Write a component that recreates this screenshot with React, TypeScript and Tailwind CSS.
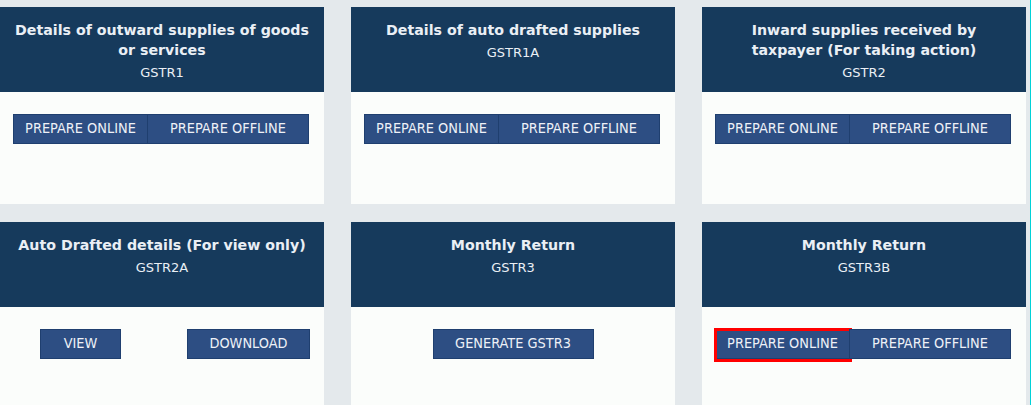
import React from 'react';

type Action = { label: string; width: string; highlighted?: boolean };

type Card = {
    title: string[];
    code: string;
    layout: 'group' | 'split' | 'single';
    actions: Action[];
};

const prepare = (highlighted = false): Action[] => [
    { label: 'PREPARE ONLINE', width: 'w-[135px]', highlighted },
    { label: 'PREPARE OFFLINE', width: 'w-[162px]' },
];

const cards: Card[] = [
    {
        title: ['Details of outward supplies of goods', 'or services'],
        code: 'GSTR1',
        layout: 'group',
        actions: prepare(),
    },
    {
        title: ['Details of auto drafted supplies'],
        code: 'GSTR1A',
        layout: 'group',
        actions: prepare(),
    },
    {
        title: ['Inward supplies received by', 'taxpayer (For taking action)'],
        code: 'GSTR2',
        layout: 'group',
        actions: prepare(),
    },
    {
        title: ['Auto Drafted details (For view only)'],
        code: 'GSTR2A',
        layout: 'split',
        actions: [
            { label: 'VIEW', width: 'w-[81px]' },
            { label: 'DOWNLOAD', width: 'w-[123px]' },
        ],
    },
    {
        title: ['Monthly Return'],
        code: 'GSTR3',
        layout: 'single',
        actions: [{ label: 'GENERATE GSTR3', width: 'w-[161px]' }],
    },
    {
        title: ['Monthly Return'],
        code: 'GSTR3B',
        layout: 'group',
        actions: prepare(true),
    },
];

const ActionButton = ({ action, joined }: { action: Action; joined?: boolean }) => (
    <button
        className={`relative h-[30px] ${action.width} bg-[#2d4e83] border border-[#1f3f6f] text-[14.4px] text-[#eef1f7] whitespace-nowrap ${joined ? '-ml-px first:ml-0' : ''}`}
        style={{ fontFamily: '"DejaVu Sans Condensed", "DejaVu Sans", sans-serif' }}
    >
        {action.label}
        {action.highlighted && (
            <span className="absolute -left-[2px] -top-[2px] w-[138px] h-[34px] border-[3px] border-[#ff0000] pointer-events-none" />
        )}
    </button>
);

const ReturnCard = ({ card }: { card: Card }) => (
    <div className="flex flex-col bg-[#fbfdfb] h-[197px]">
        <div className="h-[85px] bg-[#163a5c] pt-[13px] text-center text-[#eaeff5]">
            {card.title.map((line) => (
                <div key={line} className="text-[14.2px] leading-[20px] font-bold whitespace-nowrap">
                    {line}
                </div>
            ))}
            <div className="text-[13px] leading-[20px] mt-[3px]">{card.code}</div>
        </div>
        <div className="pt-[22px]">
            {card.layout === 'group' && (
                <div className="flex pl-[13px]">
                    {card.actions.map((a) => (
                        <ActionButton key={a.label} action={a} joined />
                    ))}
                </div>
            )}
            {card.layout === 'split' && (
                <div className="flex justify-between pl-[40px] pr-[14px]">
                    {card.actions.map((a) => (
                        <ActionButton key={a.label} action={a} />
                    ))}
                </div>
            )}
            {card.layout === 'single' && (
                <div className="flex justify-center">
                    <ActionButton action={card.actions[0]} />
                </div>
            )}
        </div>
    </div>
);

export default function App() {
    return (
        <div
            className="w-[1031px] h-[405px] overflow-hidden bg-[#e4e9ec] border-r border-[#00d2d8] pt-[7px]"
            style={{ fontFamily: '"DejaVu Sans", Verdana, sans-serif' }}
        >
            <div className="grid grid-cols-[324px_324px_324px] gap-x-[27px] gap-y-[18px]">
                {cards.map((card) => (
                    <ReturnCard key={card.code} card={card} />
                ))}
            </div>
        </div>
    );
}
